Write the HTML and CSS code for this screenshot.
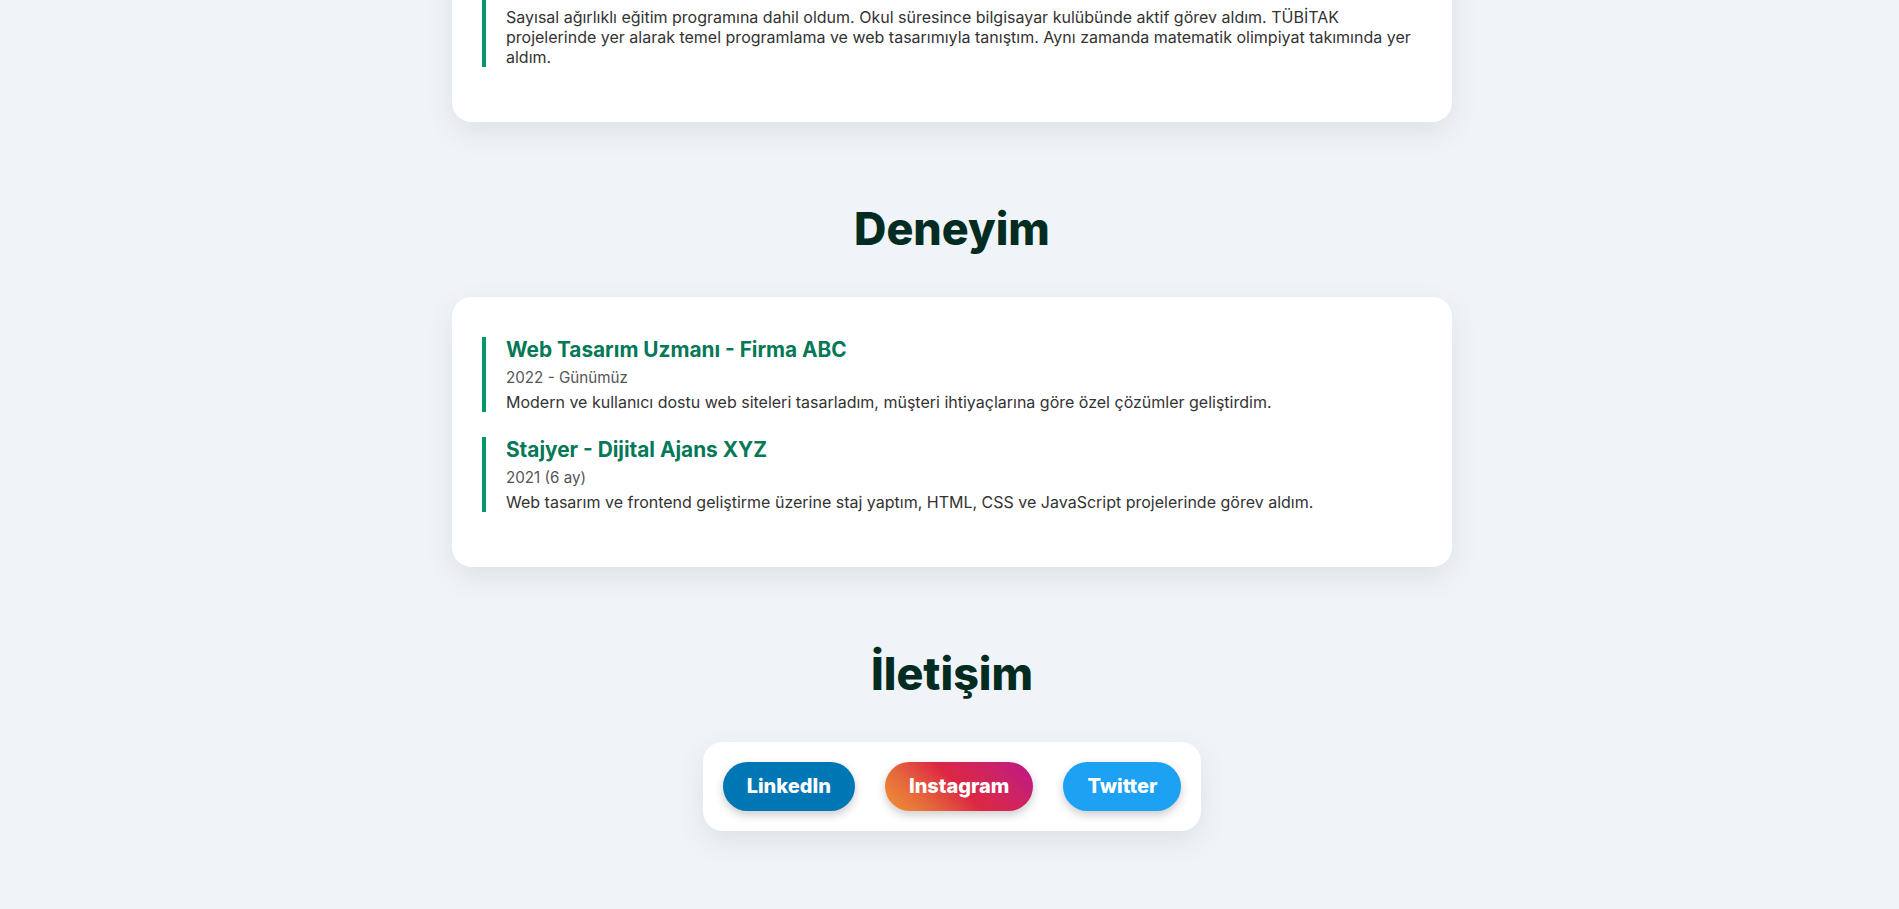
FILE: index.html
```html
<!DOCTYPE html>
<html lang="tr">

<head>
    <meta charset="utf-8">
    <title>Özgeçmiş</title>
    <link rel="stylesheet" href="styles.css">
</head>

<body>
    <main class="container">
        <!-- egitim (ust kisim sayfa disinda kaliyor) -->
        <section class="section first">
            <div class="card">
                <div class="item">
                    <h3>Fen Lisesi</h3>
                    <p class="date">2016 - 2020</p>
                    <p class="desc">Sayısal ağırlıklı eğitim programına dahil oldum. Okul süresince bilgisayar kulübünde aktif görev aldım. TÜBİTAK projelerinde yer alarak temel programlama ve web tasarımıyla tanıştım. Aynı zamanda matematik olimpiyat takımında yer aldım.</p>
                </div>
            </div>
        </section>

        <section class="section">
            <h2>Deneyim</h2>
            <div class="card">
                <div class="item">
                    <h3>Web Tasarım Uzmanı - Firma ABC</h3>
                    <p class="date">2022 - Günümüz</p>
                    <p class="desc">Modern ve kullanıcı dostu web siteleri tasarladım, müşteri ihtiyaçlarına göre özel çözümler geliştirdim.</p>
                </div>
                <div class="item">
                    <h3>Stajyer - Dijital Ajans XYZ</h3>
                    <p class="date">2021 (6 ay)</p>
                    <p class="desc">Web tasarım ve frontend geliştirme üzerine staj yaptım, HTML, CSS ve JavaScript projelerinde görev aldım.</p>
                </div>
            </div>
        </section>

        <section class="section">
            <h2>İletişim</h2>
            <div class="social">
                <a class="btn linkedin" href="#">LinkedIn</a>
                <a class="btn instagram" href="#">Instagram</a>
                <a class="btn twitter" href="#">Twitter</a>
            </div>
        </section>
    </main>
</body>
</html>
```
FILE: styles.css
```css
* {
    box-sizing: border-box;
}

body {
    margin: 0;
    padding: 0 0 80px 5px;
    background: #f0f4f8;
    font-family: Inter, "Noto Sans", sans-serif;
    color: #333;
}

.container {
    width: 1000px;
    margin: 0 auto;
}

.first {
    margin-top: -88px;
}

.section h2 {
    margin: 79px 0 40px;
    text-align: center;
    font-size: 44.8px;
    line-height: 56px;
    font-weight: 800;
    color: #022c22;
}

.card {
    background: #fff;
    border-radius: 20px;
    padding: 40px 30px 30px;
    box-shadow: 0 10px 30px rgba(0, 0, 0, 0.08);
}

.item {
    border-left: 4px solid #059669;
    padding-left: 20px;
    margin-bottom: 25px;
}

.item h3 {
    margin: 0 0 5px;
    font-size: 20.8px;
    line-height: 26px;
    font-weight: 700;
    color: #047857;
}

.date {
    margin: 0 0 5px;
    font-size: 15.2px;
    line-height: 19px;
    color: #555;
}

.desc {
    margin: 0;
    font-size: 16px;
    line-height: 20px;
    color: #333;
}

.social {
    display: flex;
    gap: 30px;
    width: fit-content;
    margin: 0 auto;
    padding: 20px;
    background: #fff;
    border-radius: 20px;
    box-shadow: 0 10px 30px rgba(0, 0, 0, 0.08);
}

.btn {
    display: inline-block;
    padding: 12px 24px;
    font-size: 20px;
    line-height: 25px;
    font-weight: 800;
    color: #fff;
    text-decoration: none;
    border-radius: 30px;
    box-shadow: 0 4px 10px rgba(0, 0, 0, 0.2);
}

.linkedin {
    background: #0077b5;
}

.instagram {
    background: linear-gradient(45deg, #f09433 0%, #e6683c 25%, #dc2743 50%, #cc2366 75%, #bc1888 100%);
}

.twitter {
    background: #1da1f2;
}
```
